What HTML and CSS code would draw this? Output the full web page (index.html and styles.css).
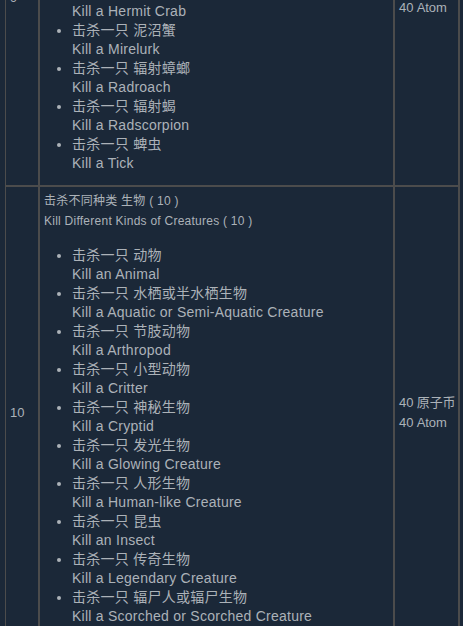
FILE: index.html
```html
<!DOCTYPE html>
<html lang="zh-CN">
<head>
<meta charset="utf-8">
<title>Challenges</title>
<link rel="stylesheet" href="styles.css">
</head>
<body>
<div class="viewport">
  <table class="challenges">
    <colgroup>
      <col class="col-num">
      <col class="col-task">
      <col class="col-reward">
    </colgroup>
    <tbody>
      <tr>
        <td class="num">9</td>
        <td class="task">
          <div class="title">击杀不同种类 节肢动物 ( 8 )<br>Kill Different Kinds of Arthropods ( 8 )</div>
          <ul class="items">
            <li>击杀一只 蚂蚁<br>Kill an Ant</li>
            <li>击杀一只 膨胀蝇<br>Kill a Bloatfly</li>
            <li>击杀一只 吸血虫<br>Kill a Bloodbug</li>
            <li>击杀一只 寄居蟹<br>Kill a Hermit Crab</li>
            <li>击杀一只 泥沼蟹<br>Kill a Mirelurk</li>
            <li>击杀一只 辐射蟑螂<br>Kill a Radroach</li>
            <li>击杀一只 辐射蝎<br>Kill a Radscorpion</li>
            <li>击杀一只 蜱虫<br>Kill a Tick</li>
          </ul>
        </td>
        <td class="reward">40 原子币<br>40 Atom</td>
      </tr>
      <tr>
        <td class="num">10</td>
        <td class="task">
          <div class="title">击杀不同种类 生物 ( 10 )<br>Kill Different Kinds of Creatures ( 10 )</div>
          <ul class="items">
            <li>击杀一只 动物<br>Kill an Animal</li>
            <li>击杀一只 水栖或半水栖生物<br>Kill a Aquatic or Semi-Aquatic Creature</li>
            <li>击杀一只 节肢动物<br>Kill a Arthropod</li>
            <li>击杀一只 小型动物<br>Kill a Critter</li>
            <li>击杀一只 神秘生物<br>Kill a Cryptid</li>
            <li>击杀一只 发光生物<br>Kill a Glowing Creature</li>
            <li>击杀一只 人形生物<br>Kill a Human-like Creature</li>
            <li>击杀一只 昆虫<br>Kill an Insect</li>
            <li>击杀一只 传奇生物<br>Kill a Legendary Creature</li>
            <li>击杀一只 辐尸人或辐尸生物<br>Kill a Scorched or Scorched Creature</li>
          </ul>
        </td>
        <td class="reward">40 原子币<br>40 Atom</td>
      </tr>
    </tbody>
  </table>
</div>
</body>
</html>
```

FILE: styles.css
```css
html, body {
  margin: 0;
  padding: 0;
  background: #1b2838;
}

body {
  font-family: "Liberation Sans", Arial, "Noto Sans CJK SC", sans-serif;
  font-size: 14px;
  color: #acb2b8;
}

.viewport {
  height: 626px;
  overflow: hidden;
}

.challenges {
  margin: -190.5px 0 0 5px;
  width: 455px;
  table-layout: fixed;
  border-collapse: separate;
  border-spacing: 0;
  border-left: 1px solid #4c4c4c;
}

.col-num { width: 34px; }
.col-task { width: 355px; }
.col-reward { width: 65px; }

.challenges td {
  box-sizing: border-box;
  border-right: 2px solid #4c4c4c;
  border-bottom: 2px solid #4c4c4c;
  padding: 4px 4px 3px 4px;
}

.num {
  vertical-align: middle;
  font-size: 13px;
  line-height: 20px;
}

.reward {
  vertical-align: middle;
  font-size: 13px;
  line-height: 20px;
  padding-left: 5px;
  white-space: nowrap;
  letter-spacing: -0.1px;
}

.task {
  vertical-align: top;
  letter-spacing: 0.25px;
}

.title {
  font-size: 12px;
  line-height: 20px;
}

.items {
  margin: 15px 0 9px 0;
  padding-left: 28px;
  line-height: 19px;
}
```
